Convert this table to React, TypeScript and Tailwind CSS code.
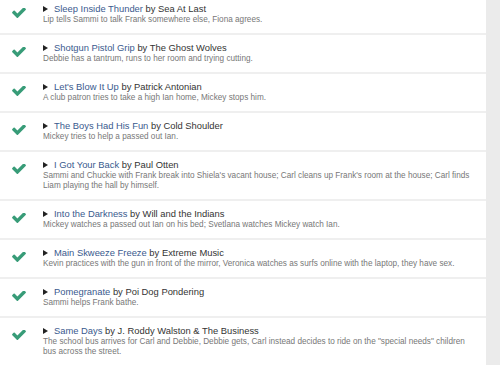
import React from 'react';

interface Song {
  title: string;
  artist: string;
  scene: string;
}

const songs: Song[] = [
  { title: 'Sleep Inside Thunder', artist: 'Sea At Last', scene: 'Lip tells Sammi to talk Frank somewhere else, Fiona agrees.' },
  { title: 'Shotgun Pistol Grip', artist: 'The Ghost Wolves', scene: 'Debbie has a tantrum, runs to her room and trying cutting.' },
  { title: "Let's Blow It Up", artist: 'Patrick Antonian', scene: 'A club patron tries to take a high Ian home, Mickey stops him.' },
  { title: 'The Boys Had His Fun', artist: 'Cold Shoulder', scene: 'Mickey tries to help a passed out Ian.' },
  {
    title: 'I Got Your Back',
    artist: 'Paul Otten',
    scene: "Sammi and Chuckie with Frank break into Shiela's vacant house; Carl cleans up Frank's room at the house; Carl finds Liam playing the hall by himself.",
  },
  { title: 'Into the Darkness', artist: 'Will and the Indians', scene: 'Mickey watches a passed out Ian on his bed; Svetlana watches Mickey watch Ian.' },
  {
    title: 'Main Skweeze Freeze',
    artist: 'Extreme Music',
    scene: 'Kevin practices with the gun in front of the mirror, Veronica watches as surfs online with the laptop, they have sex.',
  },
  { title: 'Pomegranate', artist: 'Poi Dog Pondering', scene: 'Sammi helps Frank bathe.' },
  {
    title: 'Same Days',
    artist: 'J. Roddy Walston & The Business',
    scene: 'The school bus arrives for Carl and Debbie, Debbie gets, Carl instead decides to ride on the "special needs" children bus across the street.',
  },
];

const CheckIcon = () => (
  <svg width="14" height="10" viewBox="121 404 1550 1122" className="text-[#389c78]">
    <path
      fill="currentColor"
      d="M1671 566q0 40-28 68l-724 724-136 136q-28 28-68 28t-68-28l-136-136-362-362q-28-28-28-68t28-68l136-136q28-28 68-28t68 28l294 295 656-657q28-28 68-28t68 28l136 136q28 28 28 68z"
    />
  </svg>
);

const SongRow: React.FC<{ song: Song }> = ({ song }) => (
  <div className="flex border-b-2 border-[#efefef]">
    {/* played marker */}
    <div className="w-[43px] shrink-0 pl-[12px] pt-[12px]">
      <CheckIcon />
    </div>
    <div className="flex-1 pt-[7px] pb-[8px] pr-[8px]">
      <div className="flex items-center text-[9.4px] leading-[12px]">
        <svg width="5" height="6" viewBox="0 0 5 6" className="mr-[6px] shrink-0">
          <path d="M0 0 L5 3 L0 6 Z" fill="#222" />
        </svg>
        <span className="text-[#3a5a8e]">{song.title}</span>
        <span className="text-[#333]">&nbsp;by {song.artist}</span>
      </div>
      <p className="text-[8.2px] leading-[10px] text-[#777]">{song.scene}</p>
    </div>
  </div>
);

export default function App() {
  return (
    <div className="flex w-[500px] h-[365px] overflow-hidden bg-white" style={{ fontFamily: '"Liberation Sans", Arial, sans-serif' }}>
      <div className="w-[486px] shrink-0 overflow-hidden">
        <div className="-mt-[4px]">
          {songs.map(song => (
            <SongRow key={song.title} song={song} />
          ))}
        </div>
      </div>
      <div className="flex-1 bg-[#ebebeb]" />
    </div>
  );
}
